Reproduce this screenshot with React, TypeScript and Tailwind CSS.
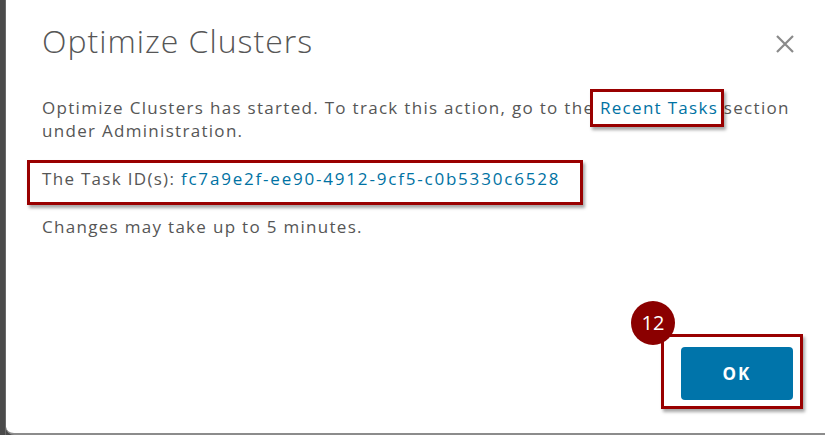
import React from "react";

const Callout: React.FC<{ className?: string }> = ({ className }) => (
  <span
    className={`pointer-events-none absolute border-[3px] border-[#990000] shadow-[2px_3px_3px_rgba(0,0,0,0.35)] ${className}`}
  />
);

const App: React.FC = () => {
  return (
    <div
      className="w-[825px] h-[435px] flex bg-[#4b4b4b] overflow-hidden"
      style={{ fontFamily: "'Open Sans', 'Liberation Sans', sans-serif" }}
    >
      <div className="w-[6px] border-r border-[#6a6a6a]" />
      <div className="relative flex-1 flex flex-col bg-white rounded-bl-[8px] border-b-2 border-[#8c8c8c] pl-[36px] pr-[32px]">
        {/* header */}
        <div className="flex items-start justify-between pt-[20px]">
          <h2 className="text-[32px] leading-[42px] font-light text-[#565656] tracking-[1px]">
            Optimize Clusters
          </h2>
          <button className="mt-[13px] mr-[-3px] text-[#8a8a8a]">
            <svg width="22" height="22" viewBox="0 0 22 22" fill="none" stroke="currentColor" strokeWidth="2.2">
              <path d="M3 3 L19 19 M19 3 L3 19" />
            </svg>
          </button>
        </div>

        {/* body */}
        <div className="mt-[34px] mr-[-32px] text-[17px] leading-[23px] text-[#565656] tracking-[1.3px] whitespace-nowrap">
          <p>
            Optimize Clusters has started. To track this action, go to the{" "}
            <span className="relative">
              <a href="#" className="text-[#0072a3]">
                Recent Tasks
              </a>
              <Callout className="left-[-10px] right-[-6px] top-[-7px] bottom-[-8px]" />
            </span>{" "}
            section
            <br />
            under Administration.
          </p>
          <p className="relative mt-[25px]">
            The Task ID(s):{" "}
            <a href="#" className="text-[#0072a3] tracking-[1.8px]">
              fc7a9e2f-ee90-4912-9cf5-c0b5330c6528
            </a>
            <Callout className="left-[-15px] top-[-7px] w-[556px] h-[45px]" />
          </p>
          <p className="mt-[25px]">Changes may take up to 5 minutes.</p>
        </div>

        {/* footer */}
        <div className="mt-auto flex justify-end pb-[33px]">
          <div className="relative">
            <button className="w-[112px] h-[53px] rounded-[4px] bg-[#0074aa] text-white text-[17px] font-bold tracking-[2px]">
              OK
            </button>
            <Callout className="left-[-20px] right-[-10px] top-[-13px] bottom-[-9px]" />
            <span className="absolute left-[-50px] top-[-46px] w-[44px] h-[44px] rounded-full bg-[#8b0000] text-white text-[20px] flex items-center justify-center">
              12
            </span>
          </div>
        </div>
      </div>
    </div>
  );
};

export default App;
